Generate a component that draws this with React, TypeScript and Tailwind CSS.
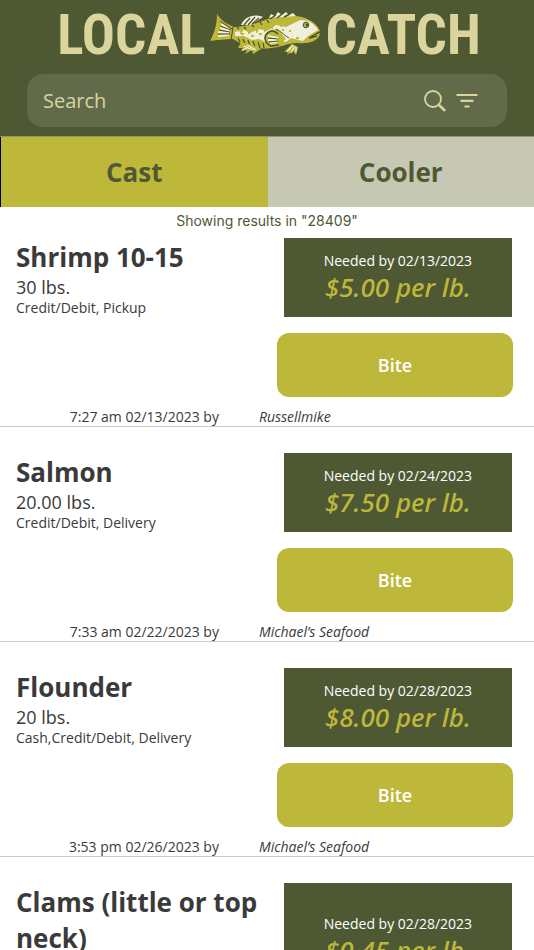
type Listing = {
  name: string;
  amount: string;
  terms: string;
  neededBy: string;
  price: string;
  posted: string;
  buyer: string;
};

const listings: Listing[] = [
  { name: "Shrimp 10-15", amount: "30 lbs.", terms: "Credit/Debit, Pickup", neededBy: "02/13/2023", price: "$5.00", posted: "7:27 am 02/13/2023", buyer: "Russellmike" },
  { name: "Salmon", amount: "20.00 lbs.", terms: "Credit/Debit, Delivery", neededBy: "02/24/2023", price: "$7.50", posted: "7:33 am 02/22/2023", buyer: "Michael’s Seafood" },
  { name: "Flounder", amount: "20 lbs.", terms: "Cash,Credit/Debit, Delivery", neededBy: "02/28/2023", price: "$8.00", posted: "3:53 pm 02/26/2023", buyer: "Michael’s Seafood" },
  { name: "Clams (little or top neck)", amount: "100 lbs.", terms: "Credit/Debit, Delivery", neededBy: "02/28/2023", price: "$0.45", posted: "3:51 pm 02/26/2023", buyer: "Michael’s Seafood" },
];

function Fish() {
  return (
    <svg viewBox="0 0 112 46" className="h-[46px] w-28 shrink-0" aria-hidden="true">
      {/* body and tail */}
      <path d="M7 2 C11 8 16 12 24 15 C34 15 44 12 55 8 C66 4 84 2 95 6 C103 9 108 14 110 19 L102 24 L110 21 C109 30 97 32 87 31 C77 31 73 35 61 36 C47 38 34 34 23 27 C16 27 7 28 0 29 C5 20 7 11 7 2Z" fill="#beb83a" />
      {/* pale flank */}
      <path d="M25 20 L34 18 L40 21 L49 17 L57 19 L66 13 L76 15 L90 8 C99 8 105 12 108 18 L98 24 L93 29 L81 26 L76 30 L67 27 L58 31 L49 27 L42 28 L34 24 L25 24Z" fill="#f0efdc" />
      <path d="M11 12 L20 18 M10 16 L20 19 M8 20 L19 21 M8 24 L19 23" stroke="#f0efdc" strokeWidth="2" />
      <path d="M10 9 L22 17 M10 14 L21 18 M9 18 L20 20 M8 22 L20 22 M23 15 L21 28" stroke="#46512d" strokeWidth="1" />
      {/* dorsal fins */}
      <path d="M31 13 C34 5 44 1 53 5 L47 9 L40 13Z" fill="#f0efdc" />
      <path d="M34 13 L40 6 M38 13 L45 5 M42 12 L49 6" stroke="#46512d" strokeWidth="1.2" />
      <path d="M59 6 L61 2 L65 4 L68 0 L72 3 L76 0 L79 3 L83 1 L86 4Z" fill="#f0efdc" />
      <path d="M60 7 L66 3 M67 6 L72 2 M74 5 L80 2" stroke="#46512d" strokeWidth="1.5" />
      {/* scale markings */}
      <path d="M29 17 l2 5 l2-5 M37 16 l2 6 l2-6 M45 14 l2 7 l2-7 M52 12 l3 8 l1-9 M60 10 l2 7 l3-8 M69 8 l2 7 l3-8 M78 7 l1 5 l4-6" fill="#beb83a" stroke="#beb83a" strokeWidth="1" />
      <path d="M28 26 l2 4 M33 27 l2 5 M38 28 l2 6 M43 29 l2 6 M48 30 l2 6 M53 31 l1 5 M27 15 l2 2 M34 15 l2 2 M42 13 l2 2 M50 10 l2 3 M57 8 l2 3" stroke="#46512d" strokeWidth="1.2" fill="none" />
      <path d="M31 22 h3 M41 24 h3 M49 22 h3 M65 18 h3 M72 18 h2 M79 19 h2 M86 26 h3" stroke="#beb83a" strokeWidth="2" />
      {/* gill fin */}
      <path d="M61 34 C54 31 53 23 59 19 C65 15 70 19 76 27 L69 32Z" fill="#beb83a" />
      <path d="M69 33 L61 34 C54 31 53 23 59 20 C62 18 65 19 68 22" fill="none" stroke="#46512d" strokeWidth="1.5" />
      <path d="M58 24 L68 26 M58 28 L68 28 M60 31 L67 30" stroke="#f0efdc" strokeWidth="1.8" />
      <path d="M58 26 L68 27 M59 30 L68 29 M66 17 C72 20 75 24 79 26" stroke="#46512d" strokeWidth="1" fill="none" />
      {/* lower fins */}
      <path d="M31 30 L28 36 L33 36 L31 39 L37 38 L35 42 L42 38 L43 42 L51 37 L43 33Z" fill="#beb83a" />
      <path d="M34 34 L43 38 M37 33 L46 38 M32 38 l5-2" stroke="#f0efdc" strokeWidth="1.3" />
      <path d="M82 32 L74 40 L79 39 L77 43 L83 39 L86 43 L88 35Z" fill="#beb83a" />
      <path d="M83 33 L77 40 M85 34 L81 41 M86 35 L86 40" stroke="#f0efdc" strokeWidth="1.2" />
      {/* eye and mouth */}
      <circle cx="96" cy="13" r="2.8" fill="#beb83a" stroke="#46512d" strokeWidth="1" />
      <circle cx="97" cy="13" r="1.4" fill="#46512d" />
      <path d="M109 20 L99 26 L107 24" stroke="#46512d" strokeWidth="1.3" fill="none" />
    </svg>
  );
}

function ListingRow({ item }: { item: Listing }) {
  return (
    <li className="border-b border-[#c9c9c9] pt-[26px] first:pt-[7px]">
      <div className="flex gap-4 pr-[22px] pl-4">
        <div className="min-w-0 flex-1 pt-px">
          <h2 className="text-[26px] leading-9 font-bold">{item.name}</h2>
          <p className="text-lg leading-6">{item.amount}</p>
          <p className="text-sm leading-[18px]">{item.terms}</p>
        </div>
        <div className="flex w-[46%] shrink-0 flex-col items-center justify-center bg-[#4e5934] pb-0.5">
          <p className="text-sm leading-5 text-white">Needed by {item.neededBy}</p>
          <p className="font-['Noto_Sans',sans-serif] text-[26px] leading-8 font-medium text-[#beb83a] italic">{item.price} per lb.</p>
        </div>
      </div>
      <div className="mt-4 flex justify-end pr-[21px]">
        <button type="button" className="h-16 w-[46%] rounded-xl bg-[#beb83a] text-lg font-semibold text-white">
          Bite
        </button>
      </div>
      <div className="mt-[11px] flex gap-10 text-sm leading-[18px]">
        <p className="w-[41%] text-right">{item.posted} by</p>
        <p className="italic">{item.buyer}</p>
      </div>
    </li>
  );
}

export default function App() {
  return (
    <div className="min-h-screen bg-white font-['Open_Sans','Noto_Sans',sans-serif] text-[#3a3a3a]">
      <header className="border-b border-[#8f9678] bg-[#4e5934] pt-[10px] pb-[9px]">
        <h1 className="flex h-[50px] items-center justify-center gap-1 pl-1 font-['Liberation_Sans_Narrow','Roboto_Condensed','DejaVu_Sans_Condensed',sans-serif] text-[55px] leading-[50px] font-bold text-[#dbd59d]">
          <span>LOCAL</span>
          <Fish />
          <span>CATCH</span>
        </h1>
        <form role="search" className="mx-[27px] mt-[14px] flex h-[53px] items-center rounded-2xl bg-[#616b4a] pr-7 pl-4 text-[#dbd59d]">
          <input type="search" aria-label="Search" placeholder="Search" className="min-w-0 flex-1 bg-transparent text-xl outline-none placeholder:text-[#dbd59d]" />
          <button type="submit" aria-label="Submit search" className="mr-2">
            <svg viewBox="0 0 24 24" className="size-6" fill="none" stroke="currentColor" strokeLinecap="round">
              <circle cx="10" cy="10" r="8" strokeWidth="1.8" />
              <path d="M16 16 L21.5 21.2" strokeWidth="2.6" />
            </svg>
          </button>
          <button type="button" aria-label="Filter">
            <svg viewBox="0 0 24 24" className="size-6" fill="none" stroke="currentColor" strokeWidth="2.2">
              <path d="M1.5 6 H22.5 M5.5 11.8 H18.5 M9.5 17.5 H14.5" />
            </svg>
          </button>
        </form>
      </header>
      <nav className="flex h-[70px] border-l border-black text-[26px] font-bold text-[#4e5934]">
        <button type="button" className="flex-1 bg-[#beb83a]">Cast</button>
        <button type="button" className="flex-1 bg-[#c7c8b3]">Cooler</button>
      </nav>
      <main>
        <p className="pt-1 text-center font-['Inter',sans-serif] text-sm leading-5 text-[#4e5934]">Showing results in "28409"</p>
        <ul>
          {listings.map((item) => (
            <ListingRow key={item.name} item={item} />
          ))}
        </ul>
      </main>
    </div>
  );
}
